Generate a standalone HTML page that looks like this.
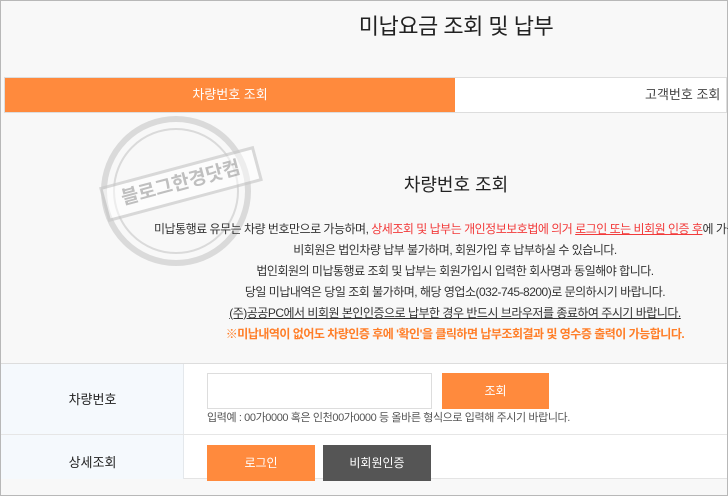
<!DOCTYPE html>
<html><head><meta charset="utf-8">
<style>
*{margin:0;padding:0;box-sizing:border-box}
body{width:728px;height:496px;overflow:hidden;background:#f8f8f8;font-family:"Liberation Sans","Noto Sans CJK KR",sans-serif;position:relative;border:1px solid #b8b8b8}
.title{position:absolute;left:0;width:910px;top:8px;text-align:center;font-size:22px;color:#222;letter-spacing:-0.5px}
.tabs{position:absolute;top:76px;left:3px;right:0;height:36px;border:1px solid #ddd;background:#fff}
.tab1{position:absolute;left:0;top:0;width:450px;height:34px;background:#ff8a3d;color:#fff;font-size:13px;text-align:center;line-height:34px}
.tab2{position:absolute;left:640px;top:0;height:34px;line-height:34px;font-size:13px;color:#444}
.h2{position:absolute;top:170px;left:0;width:910px;text-align:center;font-size:18px;color:#222}
.lines{position:absolute;top:218px;left:0;width:908px;text-align:center;font-size:12px;color:#333;line-height:21px;white-space:nowrap;letter-spacing:-0.5px}
.l1{text-align:left;padding-left:153px}
.red{color:#f23a3a}.u{text-decoration:underline}
.org{color:#ff7e28;font-weight:bold}
.stamp{position:absolute;left:100px;top:115px;width:150px;height:150px;border:6px solid rgba(150,150,150,.3);border-radius:50%}
.stamp2{position:absolute;left:112px;top:127px;width:126px;height:126px;border:2px solid rgba(150,150,150,.3);border-radius:50%}
.band{position:absolute;left:100px;top:165px;width:160px;height:36px;border:3px solid rgba(150,150,150,.35);background:rgba(255,255,255,.5);transform:rotate(-15deg);font-size:19px;font-weight:bold;color:rgba(150,150,150,.6);text-align:center;line-height:30px}
.tbl{position:absolute;top:362px;left:0;right:0;height:116px;background:#fff;border-top:1px solid #ddd;border-bottom:1px solid #e4e4e4}
.lc{position:absolute;left:0;top:0;width:183px;height:115px;background:#f5f9fd;border-right:1px solid #e4e8ec}
.rowline{position:absolute;left:0;right:0;top:70px;border-top:1px solid #e6e6e6}
.lab{position:absolute;left:0;width:183px;text-align:center;font-size:13px;color:#222}
.inp{position:absolute;left:206px;top:9px;width:225px;height:36px;border:1px solid #ddd;background:#fff}
.btn{position:absolute;height:36px;line-height:36px;text-align:center;color:#fff;font-size:12px}
.hint{position:absolute;left:206px;top:45px;font-size:11px;color:#555;letter-spacing:-0.4px}
</style></head><body>
<div class="title">미납요금 조회 및 납부</div>
<div class="tabs"><div class="tab1">차량번호 조회</div><div class="tab2">고객번호 조회</div></div>
<div class="stamp"></div><div class="stamp2"></div>
<div class="band">블로그한경닷컴</div>
<div class="h2">차량번호 조회</div>
<div class="lines">
<div class="l1">미납통행료 유무는 차량 번호만으로 가능하며, <span class="red">상세조회 및 납부는 개인정보보호법에 의거 <span class="u">로그인 또는 비회원 인증 후</span></span>에 가능합니다.</div>
<div>비회원은 법인차량 납부 불가하며, 회원가입 후 납부하실 수 있습니다.</div>
<div>법인회원의 미납통행료 조회 및 납부는 회원가입시 입력한 회사명과 동일해야 합니다.</div>
<div>당일 미납내역은 당일 조회 불가하며, 해당 영업소(032-745-8200)로 문의하시기 바랍니다.</div>
<div class="u">(주)공공PC에서 비회원 본인인증으로 납부한 경우 반드시 브라우저를 종료하여 주시기 바랍니다.</div>
<div class="org">※미납내역이 없어도 차량인증 후에 '확인'을 클릭하면 납부조회결과 및 영수증 출력이 가능합니다.</div>
</div>
<div class="tbl">
<div class="lc"></div>
<div class="rowline"></div>
<div class="lab" style="top:25px">차량번호</div>
<div class="lab" style="top:88px">상세조회</div>
<div class="inp"></div>
<div class="btn" style="left:441px;top:9px;width:107px;background:#ff8a3d">조회</div>
<div class="hint">입력예 : 00가0000 혹은 인천00가0000 등 올바른 형식으로 입력해 주시기 바랍니다.</div>
<div class="btn" style="left:206px;top:81px;width:108px;background:#ff8a3d">로그인</div>
<div class="btn" style="left:322px;top:81px;width:108px;background:#555">비회원인증</div>
</div>
</body></html>
